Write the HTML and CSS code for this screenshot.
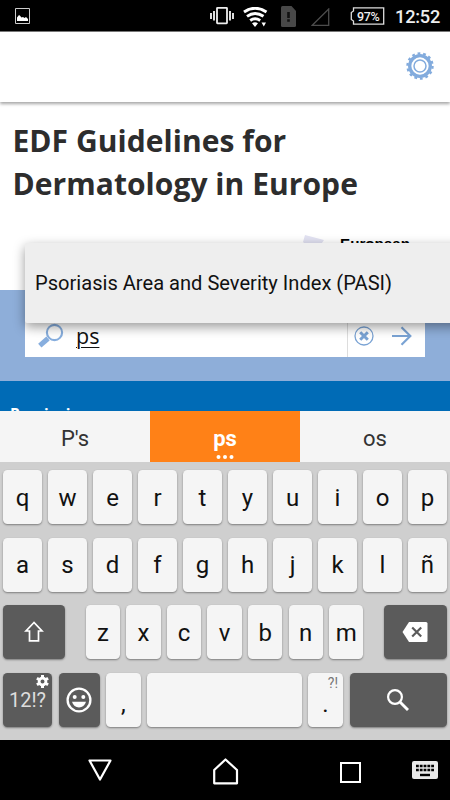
FILE: index.html
```html
<!DOCTYPE html>
<html lang="en">
<head>
<meta charset="utf-8">
<title>EDF Guidelines for Dermatology in Europe</title>
<link rel="stylesheet" href="styles.css">
</head>
<body>
<div class="phone">
  <header class="status">
    <svg class="st-gallery" width="16" height="16" viewBox="0 0 16 16"><path d="M.5.5h14v15H.5z" fill="none" stroke="#ccc"/><path d="M2 13V9.500L4 7l1 .7 1.500 1.800L8 9l1.500 1L11 9l2 2v2z" fill="#fff"/></svg>
    <svg class="st-vibrate" width="24" height="20" viewBox="0 0 24 20"><rect x="7" y="1.800" width="10" height="15.500" rx=".5" fill="none" stroke="#eee" stroke-width="1.800"/><path d="M1 7v6M4 5v9.500M20 5v9.500M23 7v6" stroke="#ddd" stroke-width="2"/></svg>
    <svg class="st-wifi" width="25" height="21" viewBox="0 0 25 21"><g fill="none" stroke="#fff" stroke-width="2.900"><path d="M1 5Q12 -2.500 23.500 5M4 9.300Q12 3.500 20.500 9.300M7.200 13.500Q12 10 17.200 13.500"/></g><path d="M9 16.300Q12 14.300 15 16.300L12 20zM18.500 15.500h4.500l-2.200 4z" fill="#fff"/></svg>
    <svg class="st-sim" width="16" height="21" viewBox="0 0 16 21"><path d="M1.500 0h9L15 5v14.500q0 1.500-1.500 1.500h-12Q0 21 0 19.500v-18Q0 0 1.500 0z" fill="#484848"/><path d="M7.500 6v6M7.500 13.200v2.500" stroke="#111" stroke-width="2.600"/></svg>
    <svg class="st-signal" width="19" height="18" viewBox="0 0 19 18"><path d="M1.300 17.300L17.700 1v16.300z" fill="none" stroke="#4c4c4c" stroke-width="1.300"/></svg>
    <div class="battery">
      <svg width="35" height="18" viewBox="0 0 35 18"><path d="M3.500.8h30.200v16.400H3.500V14l-2.200-1.500V5.500L3.500 4z" fill="none" stroke="#ddd" stroke-width="1.300"/></svg>
      <span>97%</span>
    </div>
    <time>12:52</time>
  </header>

  <main class="app">
    <div class="toolbar">
      <svg width="28" height="28" viewBox="0 0 28 28"><g fill="none" stroke="#82abdd"><circle cx="14" cy="14" r="12.600" stroke-width="2.200" stroke-dasharray="2.800 2.854"/><circle cx="14" cy="14" r="10.300" stroke-width="3.300"/><circle cx="14" cy="14" r="6" stroke-width="1.500"/></g></svg>
    </div>
    <h1>EDF Guidelines for<br>Dermatology in Europe</h1>
    <div class="logo"><svg width="21" height="18" viewBox="0 0 21 18"><path d="M2 0l19 5-9 13L0 7z" fill="#e2e2f2"/></svg><b>European</b></div>
    <div class="search-band">
      <div class="search">
        <svg class="lens" width="26" height="26" viewBox="0 0 26 26"><circle cx="16.500" cy="9.500" r="7.600" fill="none" stroke="#87aede" stroke-width="2.100"/><path d="M1.800 22.700L10 15.500" stroke="#87aede" stroke-width="5"/></svg>
        <span class="query">ps</span>
        <div class="search-actions">
          <svg width="20" height="20" viewBox="0 0 20 20"><circle cx="10" cy="10" r="9" fill="none" stroke="#7aa3d4" stroke-width="1.300"/><path d="M6.200 6.200l7.600 7.600M13.800 6.200l-7.600 7.600" stroke="#7aa3d4" stroke-width="3"/></svg>
          <svg width="22" height="20" viewBox="0 0 22 20"><path d="M1 10h18M10.500 1.300L19.300 10l-8.800 8.700" fill="none" stroke="#7aa3d4" stroke-width="2.200"/></svg>
        </div>
      </div>
      <div class="dropdown">Psoriasis Area and Severity Index (PASI)</div>
    </div>
    <div class="section">Psoriasis</div>
  </main>

  <div class="keyboard">
    <div class="suggestions">
      <span>P's</span>
      <span class="active">ps<svg width="18" height="4" viewBox="0 0 18 4"><g fill="#fff"><circle cx="2.500" cy="2" r="2"/><circle cx="9" cy="2" r="2"/><circle cx="15.500" cy="2" r="2"/></g></svg></span>
      <span>os</span>
    </div>
    <div class="keys">
      <div class="row ten"><b>q</b><b>w</b><b>e</b><b>r</b><b>t</b><b>y</b><b>u</b><b>i</b><b>o</b><b>p</b></div>
      <div class="row ten"><b>a</b><b>s</b><b>d</b><b>f</b><b>g</b><b>h</b><b>j</b><b>k</b><b>l</b><b>ñ</b></div>
      <div class="row third">
        <b class="dark"><svg width="20" height="22" viewBox="0 0 20 22"><path d="M10 1.500L2 10h3.500v9.800h9V10H18z" fill="none" stroke="#fff" stroke-width="1.700"/></svg></b>
        <div class="letters"><b>z</b><b>x</b><b>c</b><b>v</b><b>b</b><b>n</b><b>m</b></div>
        <b class="dark"><svg width="26" height="20" viewBox="0 0 26 20"><path d="M7 0h17q1.500 0 1.500 1.500v17q0 1.500-1.500 1.500H7L.500 10z" fill="#fff"/><path d="M10.200 5.500l9 9M19.200 5.500l-9 9" stroke="#5b5b5b" stroke-width="2.200"/></svg></b>
      </div>
      <div class="row fourth">
        <b class="dark symbols">12!?<svg class="cog" width="13" height="13" viewBox="0 0 13 13"><circle cx="6.500" cy="6.500" r="3.400" fill="none" stroke="#fff" stroke-width="2.800"/><path d="M6.500 0v3M6.500 10v3M.900 3.250l2.600 1.500M9.500 8.250l2.600 1.500M.900 9.750l2.600-1.500M9.500 4.750l2.600-1.500" stroke="#fff" stroke-width="3"/></svg></b>
        <b class="dark"><svg width="26" height="26" viewBox="0 0 26 26"><circle cx="13" cy="13" r="11.400" fill="none" stroke="#fff" stroke-width="2.300"/><circle cx="8.700" cy="10" r="2" fill="#fff"/><circle cx="17.300" cy="10" r="2" fill="#fff"/><path d="M6 14.800h14q-1.800 5.700-7 5.700t-7-5.700z" fill="#fff"/></svg></b>
        <b class="comma">,</b>
        <b></b>
        <b class="period">.<small>?!</small></b>
        <b class="dark"><svg width="22" height="22" viewBox="0 0 22 22"><circle cx="8" cy="8" r="6.900" fill="none" stroke="#fff" stroke-width="2.200"/><path d="M13 13l8 8" stroke="#fff" stroke-width="2.900"/></svg></b>
      </div>
    </div>
  </div>

  <nav class="nav">
    <svg class="back" width="24" height="22" viewBox="0 0 24 22"><path d="M1.500 1.500h21L12 20.500z" fill="none" stroke="#fff" stroke-width="2.200" stroke-linejoin="round"/></svg>
    <svg class="home" width="26" height="27" viewBox="0 0 26 27"><path d="M1.200 25.300V12L12.500 1.500 24 12v13.300z" fill="none" stroke="#fff" stroke-width="2.200" stroke-linejoin="round"/></svg>
    <svg class="recent" width="21" height="21" viewBox="0 0 21 21"><path d="M1 1h19v19H1z" fill="none" stroke="#fff" stroke-width="2"/></svg>
    <svg class="ime" width="26" height="18" viewBox="0 0 26 18"><rect width="26" height="18" rx="2" fill="#e8e8e8"/><path d="M4 5h18M4 9h18" stroke="#000" stroke-width="2.600" stroke-dasharray="2.800 1"/><path d="M8 14h10" stroke="#000" stroke-width="2.400"/></svg>
  </nav>
</div>
</body>
</html>
```
FILE: styles.css
```css
* { box-sizing: border-box; }
body { margin: 0; font-family: Roboto, sans-serif; }
svg { display: block; flex: none; }
.phone { width: 450px; height: 800px; overflow: hidden; display: flex; flex-direction: column; background: #fff; }

.status { height: 31px; flex: none; background: #000; display: flex; align-items: flex-start; color: #eee; }
.st-gallery { margin: 8px 0 0 15px; }
.st-vibrate { margin: 6px 0 0 179px; }
.st-wifi { margin: 7px 0 0 9px; }
.st-sim { margin: 6px 0 0 13px; }
.st-signal { margin: 8px 0 0 14px; }
.battery { position: relative; margin: 7px 0 0 20px; width: 35px; }
.battery span { position: absolute; left: 7px; top: 0; font-size: 12.500px; line-height: 19px; font-weight: 500; letter-spacing: -.3px; }
.status time { margin-left: 10px; font-size: 18.200px; line-height: 33px; font-weight: 500; letter-spacing: -.2px; }

.app { height: 380px; flex: none; overflow: hidden; }
.toolbar { height: 71px; display: flex; justify-content: flex-end; padding: 20px 16px 0 0; border-top: 1px solid #777; box-shadow: 0 2px 3px rgba(0,0,0,.35); }
h1 { margin: 18px 0 0 12.500px; font: bold 30px/42.500px "Open Sans", sans-serif; letter-spacing: .05px; color: #2d2d2d; white-space: nowrap; }
.logo { height: 66px; padding: 30px 0 0 303px; display: flex; gap: 16px; align-items: flex-start; font: 15.200px/18px "Liberation Sans", sans-serif; color: #000; }
.search-band { position: relative; height: 91px; margin-top: 19px; background: #8eaed9; padding: 12px 25px 0; }
.search { height: 55px; background: #fff; display: flex; align-items: center; padding-left: 13px; }
.lens { margin-top: 13px; }
.query { margin: 12px 0 0 12px; font: 21.500px/30px "Open Sans", sans-serif; color: #111; text-decoration: underline; text-decoration-thickness: 1px; text-underline-offset: 3px; }
.search-actions { margin-left: auto; align-self: stretch; width: 78px; border-left: 1px solid #ddd; display: flex; align-items: center; gap: 17px; padding: 13px 0 0 6px; }
.dropdown { position: absolute; left: 25px; top: -47px; width: 440px; height: 80px; border-radius: 2px; background: #eee; box-shadow: 0 4px 12px rgba(0,0,0,.4); padding-left: 10px; font-size: 20.100px; line-height: 81px; color: #111; white-space: nowrap; }
.section { height: 31px; background: #006bb6; color: #fff; padding: 23px 0 0 10px; font: bold 15.500px/20px "Open Sans", sans-serif; }

.keyboard { height: 329px; flex: none; background: #cfcfcf; }
.suggestions { height: 51px; display: grid; grid-template: 51px / repeat(3, 1fr); background: #f5f5f5; color: #333; font-size: 22px; line-height: 55px; text-align: center; }
.active { position: relative; background: #ff8117; color: #fff; font-weight: 700; }
.active svg { position: absolute; left: 66px; bottom: 3px; }
.keys { padding: 8px 3px 0; display: flex; flex-direction: column; gap: 13.500px; }
.row { height: 54px; display: grid; }
.row b { position: relative; display: flex; align-items: center; justify-content: center; background: #f5f5f5; border-radius: 4.500px; box-shadow: 0 1px 2px rgba(0,0,0,.4); font-size: 24px; font-weight: 400; line-height: 30px; color: #111; padding-top: 1px; }
.row b.dark { background: #5b5b5b; color: #ddd; padding-top: 0; }
.ten { grid-template-columns: repeat(10, 39px); gap: 6px; }
.third { grid-template-columns: 62px 277.600px 62.500px; gap: 20.800px; }
.letters { display: grid; grid-template-columns: repeat(7, 34.300px); gap: 6.250px; }
.fourth { grid-template-columns: 49px 41px 34.500px 154.500px 35px 97.500px; gap: 6.500px; }
.row .symbols { font-size: 20px; }
.cog { position: absolute; right: 3px; top: 2px; }
.row .comma, .row .period { padding-top: 8px; }
.period small { position: absolute; right: 5px; top: 1px; font-size: 14px; line-height: 18px; color: #777; }

.nav { height: 60px; flex: none; background: #000; display: flex; align-items: flex-start; }
.back { margin: 19px 0 0 88px; }
.home { margin: 18px 0 0 101px; }
.recent { margin: 22px 0 0 101px; }
.ime { margin: 21px 0 0 51px; }
```
